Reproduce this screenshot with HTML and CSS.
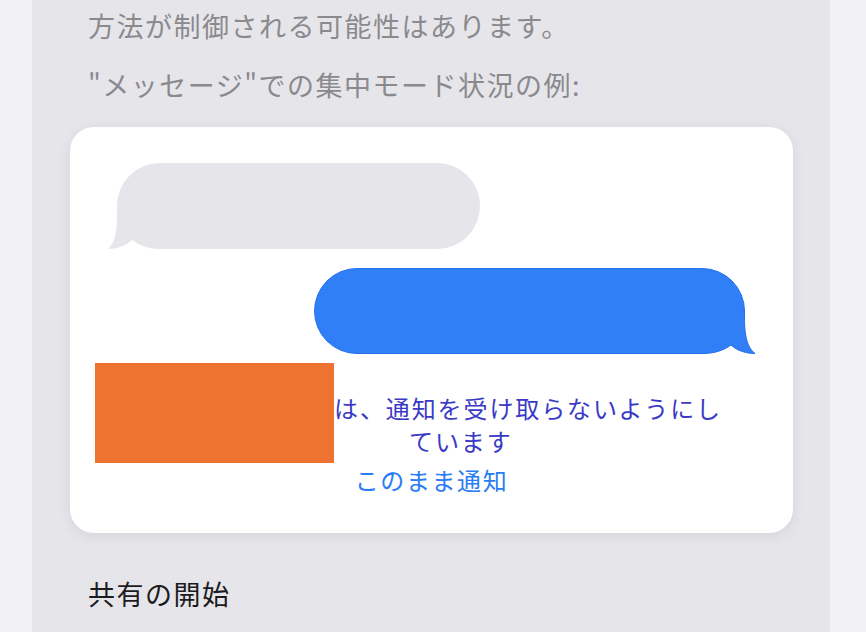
FILE: index.html
```html
<!DOCTYPE html>
<html lang="ja">
<head>
    <meta charset="UTF-8">
    <meta name="viewport" content="width=device-width, initial-scale=1.0">
    <title>集中モード</title>
    <link rel="stylesheet" href="styles.css">
</head>
<body>
    <div class="panel">
        <p class="note">方法が制御される可能性はあります。</p>
        <p class="note note-gap">"メッセージ"での集中モード状況の例:</p>

        <div class="card">
            <div class="bubble-row">
                <svg class="bubble" width="372" height="86" viewBox="0 0 372 86">
                    <path fill="#e5e5ea" d="M52 0 H329 A43 43 0 0 1 329 86 H52 C42 86 32 83 24 77 C18 83 8 86 0 86 C7 80 9 70 9 50 V43 A43 43 0 0 1 52 0 Z"/>
                </svg>
            </div>
            <div class="bubble-row bubble-row-me">
                <svg class="bubble" width="441" height="86" viewBox="0 0 441 86">
                    <path fill="#307ff7" stroke="#2571ea" stroke-width="1" d="M43 0.5 H388 A42.5 42.5 0 0 1 430.5 43 V50 C430.5 70 434 80 441 85.5 C433 85.5 423 83 417 77 C409 83 399 85.5 389 85.5 H43 A42.5 42.5 0 0 1 43 0.5 Z"/>
                </svg>
            </div>

            <div class="notice">
                <div class="redact"></div>
                <div class="notice-text">
                    <span class="line">は、通知を受け取らないようにし</span>
                    <span class="line line-wrap">ています</span>
                </div>
            </div>
            <div class="notify-anyway">このまま通知</div>
        </div>

        <p class="row-title">共有の開始</p>
    </div>
</body>
</html>
```

FILE: styles.css
```css
body {
    font-family: "Noto Sans CJK JP", "Noto Sans", sans-serif;
    background-color: #f2f1f6;
    margin: 0;
    padding: 0;
}
.panel {
    margin: 0 36px 0 32px;
    min-height: 632px;
    background: #e6e5ea;
    padding: 8px 37px 0 38px;
    box-sizing: border-box;
}
.note {
    margin: 0 0 0 18px;
    font-size: 27px;
    line-height: 36px;
    letter-spacing: 1.5px;
    color: #8a8a8e;
}
.note-gap {
    margin-top: 23px;
}
.card {
    margin-top: 24px;
    background: #fff;
    border-radius: 24px;
    box-shadow: 0 3px 14px rgba(0, 0, 0, 0.07);
    padding: 36px 0 37px;
}
.bubble-row {
    display: flex;
    padding: 0 38px;
}
.bubble-row-me {
    justify-content: flex-end;
    margin-top: 19px;
}
.bubble {
    display: block;
}
.notice {
    display: flex;
    margin: 9px 0 0 25px;
}
.redact {
    width: 239px;
    height: 100px;
    background: #ee7331;
    flex-shrink: 0;
}
.notice-text {
    margin-top: 28px;
    color: #3a3ac6;
    font-size: 24px;
    line-height: 33px;
    letter-spacing: 1.9px;
}
.line {
    display: block;
    white-space: nowrap;
}
.line-wrap {
    padding-left: 75px;
}
.notify-anyway {
    text-align: center;
    color: #2a7cf5;
    font-size: 24px;
    line-height: 33px;
    letter-spacing: 1.6px;
}
.row-title {
    margin: 43px 0 0 18px;
    font-size: 27px;
    line-height: 36px;
    letter-spacing: 1.5px;
    color: #1c1c1e;
}
```
